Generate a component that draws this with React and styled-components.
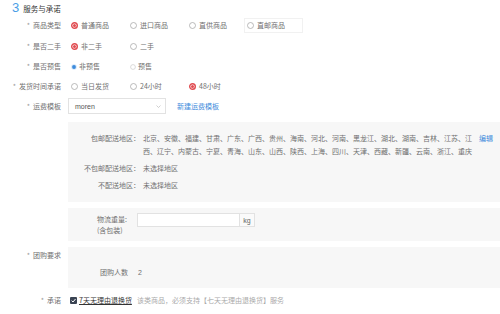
import React from "react";
import styled, { createGlobalStyle } from "styled-components";

const GlobalStyle = createGlobalStyle`
  body {
    margin: 0;
    background: #fff;
  }
`;

const Page = styled.div`
  width: 500px;
  height: 314px;
  overflow: hidden;
  font-family: "Noto Sans CJK SC", "Noto Sans", sans-serif;
  font-size: 7px;
  color: #707070;
`;

const Title = styled.div`
  display: flex;
  align-items: center;
  height: 15px;
  padding-left: 12px;
`;

const TitleNum = styled.span`
  font-family: "Liberation Sans", sans-serif;
  font-size: 13px;
  line-height: 15px;
  color: #4a9de6;
`;

const TitleText = styled.span`
  margin-left: 4px;
  margin-top: 2px;
  font-size: 7.5px;
  color: #333;
`;

const Row = styled.div`
  display: grid;
  grid-template-columns: 61px 1fr;
  column-gap: 7px;
  align-items: ${(p) => (p.$top ? "start" : "center")};
  min-height: ${(p) => p.$h || 20}px;
  margin-top: ${(p) => p.$mt || 0}px;
`;

const Label = styled.div`
  text-align: right;
  line-height: 11px;
  white-space: nowrap;
  padding-top: ${(p) => p.$pt || 0}px;
`;

const Star = styled.span`
  color: #999;
  margin-right: 3px;
`;

const Options = styled.div`
  display: flex;
  align-items: center;
`;

const Option = styled.label`
  display: flex;
  align-items: center;
  box-sizing: border-box;
  width: 59px;
  height: 15px;
  padding-left: 2px;
  gap: ${(p) => (p.$small ? 2 : 3)}px;
  line-height: 11px;
  white-space: nowrap;
  border: 1px solid ${(p) => (p.$outlined ? "#f1f1f1" : "transparent")};
  margin-left: ${(p) => (p.$outlined ? -1 : 0)}px;
`;

const Select = styled.div`
  box-sizing: border-box;
  display: flex;
  align-items: center;
  justify-content: space-between;
  width: 98px;
  height: 16px;
  padding: 0 4px 0 6px;
  border: 1px solid #e2e2e2;
  background: #fff;
  font-family: "Liberation Sans", sans-serif;
  color: #555;
`;

const Link = styled.a`
  margin-left: 11px;
  color: #3d8bdc;
  text-decoration: none;
  white-space: nowrap;
`;

const Panel = styled.div`
  background: #f7f7f7;
  box-sizing: border-box;
  height: ${(p) => p.$h}px;
`;

const AreaGrid = styled.div`
  display: grid;
  grid-template-columns: 72px 1fr auto;
  column-gap: 3px;
  row-gap: 4px;
  padding: 10px 7px 10px 0;
  line-height: 13px;
`;

const AreaLabel = styled.div`
  text-align: right;
  white-space: nowrap;
`;

const AreaValue = styled.div`
  white-space: nowrap;
`;

const Edit = styled.a`
  color: #3d8bdc;
  text-decoration: none;
`;

const WeightPanel = styled(Panel)`
  display: flex;
  align-items: flex-start;
  padding: 5px 0 0 29px;
`;

const WeightLabel = styled.div`
  width: 40px;
  line-height: 11px;
  margin-top: 1px;
`;

const InputGroup = styled.div`
  display: flex;
  height: 14px;
`;

const Input = styled.div`
  box-sizing: border-box;
  width: 103px;
  height: 14px;
  border: 1px solid #e2e2e2;
  background: #fff;
`;

const Addon = styled.div`
  box-sizing: border-box;
  width: 15px;
  height: 14px;
  border: 1px solid #e2e2e2;
  border-left: none;
  background: #fafafa;
  display: flex;
  align-items: center;
  justify-content: center;
  font-family: "Liberation Sans", sans-serif;
  color: #666;
`;

const GroupPanel = styled(Panel)`
  display: flex;
  padding: 20px 0 0 32px;
  line-height: 11px;
`;

const GroupCount = styled.span`
  margin-left: 10px;
  font-family: "Liberation Sans", sans-serif;
`;

const Promise = styled.div`
  display: flex;
  align-items: center;
  padding-left: 2px;
  white-space: nowrap;
  line-height: 11px;
`;

const Check = styled.span`
  display: inline-flex;
  width: 7px;
  height: 7px;
  background: #3b4453;
  border-radius: 1px;
  margin-right: 2px;
`;

const PromiseText = styled.span`
  color: #333;
  text-decoration: underline;
  text-underline-offset: 1px;
`;

const Hint = styled.span`
  margin-left: 5px;
  color: #aaa;
`;

const RadioIcon = ({ state }) => {
  if (state === "red")
    return (
      <svg width="7" height="7" viewBox="0 0 7 7">
        <circle cx="3.5" cy="3.5" r="2.8" fill="#fff" stroke="#e04a4f" strokeWidth="1.4" />
        <circle cx="3.5" cy="3.5" r="1.5" fill="#e04a4f" />
      </svg>
    );
  if (state === "blue")
    return (
      <svg width="6" height="6" viewBox="0 0 6 6">
        <circle cx="3" cy="3" r="2.8" fill="#d3e6f8" />
        <circle cx="3" cy="3" r="1.9" fill="#3d8bdc" />
      </svg>
    );
  if (state === "small")
    return (
      <svg width="6" height="6" viewBox="0 0 6 6">
        <circle cx="3" cy="3" r="2.4" fill="#fff" stroke="#ccc" strokeWidth="0.7" />
      </svg>
    );
  return (
    <svg width="7" height="7" viewBox="0 0 7 7">
      <circle cx="3.5" cy="3.5" r="3" fill="#fff" stroke="#aaa" strokeWidth="0.8" />
    </svg>
  );
};

const Radio = ({ state, outlined, children }) => (
  <Option $outlined={outlined} $small={state === "blue" || state === "small"}>
    <RadioIcon state={state} />
    {children}
  </Option>
);

const Field = ({ label, star = true, children, ...rest }) => (
  <Row {...rest}>
    <Label $pt={rest.$top ? 3 : 0}>
      {label && star && <Star>*</Star>}
      {label}
    </Label>
    {children}
  </Row>
);

export default function App() {
  return (
    <Page>
      <GlobalStyle />
      <Title>
        <TitleNum>3</TitleNum>
        <TitleText>服务与承诺</TitleText>
      </Title>

      <Field label="商品类型" $h={21}>
        <Options>
          <Radio state="red">普通商品</Radio>
          <Radio>进口商品</Radio>
          <Radio>直供商品</Radio>
          <Radio outlined>直邮商品</Radio>
        </Options>
      </Field>

      <Field label="是否二手" $h={21}>
        <Options>
          <Radio state="red">非二手</Radio>
          <Radio>二手</Radio>
        </Options>
      </Field>

      <Field label="是否预售" $h={19}>
        <Options>
          <Radio state="blue">非预售</Radio>
          <Radio state="small">预售</Radio>
        </Options>
      </Field>

      <Field label="发货时间承诺" $h={20}>
        <Options>
          <Radio>当日发货</Radio>
          <Radio>24小时</Radio>
          <Radio state="red">48小时</Radio>
        </Options>
      </Field>

      <Field label="运费模板" $h={20}>
        <Options>
          <Select>
            moren
            <svg width="5" height="3" viewBox="0 0 5 3">
              <path d="M0.5 0.5 L2.5 2.5 L4.5 0.5" fill="none" stroke="#bbb" strokeWidth="0.7" />
            </svg>
          </Select>
          <Link>新建运费模板</Link>
        </Options>
      </Field>

      <Field $mt={6}>
        <Panel $h={80}>
          <AreaGrid>
            <AreaLabel>包邮配送地区：</AreaLabel>
            <AreaValue>
              北京、安徽、福建、甘肃、广东、广西、贵州、海南、河北、河南、黑龙江、湖北、湖南、吉林、江苏、江
              <br />
              西、辽宁、内蒙古、宁夏、青海、山东、山西、陕西、上海、四川、天津、西藏、新疆、云南、浙江、重庆
            </AreaValue>
            <Edit>编辑</Edit>
            <AreaLabel>不包邮配送地区：</AreaLabel>
            <AreaValue>未选择地区</AreaValue>
            <span />
            <AreaLabel>不配送地区：</AreaLabel>
            <AreaValue>未选择地区</AreaValue>
            <span />
          </AreaGrid>
        </Panel>
      </Field>

      <Field $mt={6}>
        <WeightPanel $h={33}>
          <WeightLabel>
            物流重量:
            <br />
            (含包装)
          </WeightLabel>
          <InputGroup>
            <Input />
            <Addon>kg</Addon>
          </InputGroup>
        </WeightPanel>
      </Field>

      <Field label="团购要求" $mt={6} $top>
        <GroupPanel $h={41}>
          团购人数
          <GroupCount>2</GroupCount>
        </GroupPanel>
      </Field>

      <Field label="承诺" $mt={4} $h={16}>
        <Promise>
          <Check>
            <svg width="7" height="7" viewBox="0 0 7 7">
              <path d="M1.6 3.6 L3 5 L5.5 2" fill="none" stroke="#fff" strokeWidth="1" />
            </svg>
          </Check>
          <PromiseText>7天无理由退换货</PromiseText>
          <Hint>该类商品，必须支持【七天无理由退换货】服务</Hint>
        </Promise>
      </Field>
    </Page>
  );
}
